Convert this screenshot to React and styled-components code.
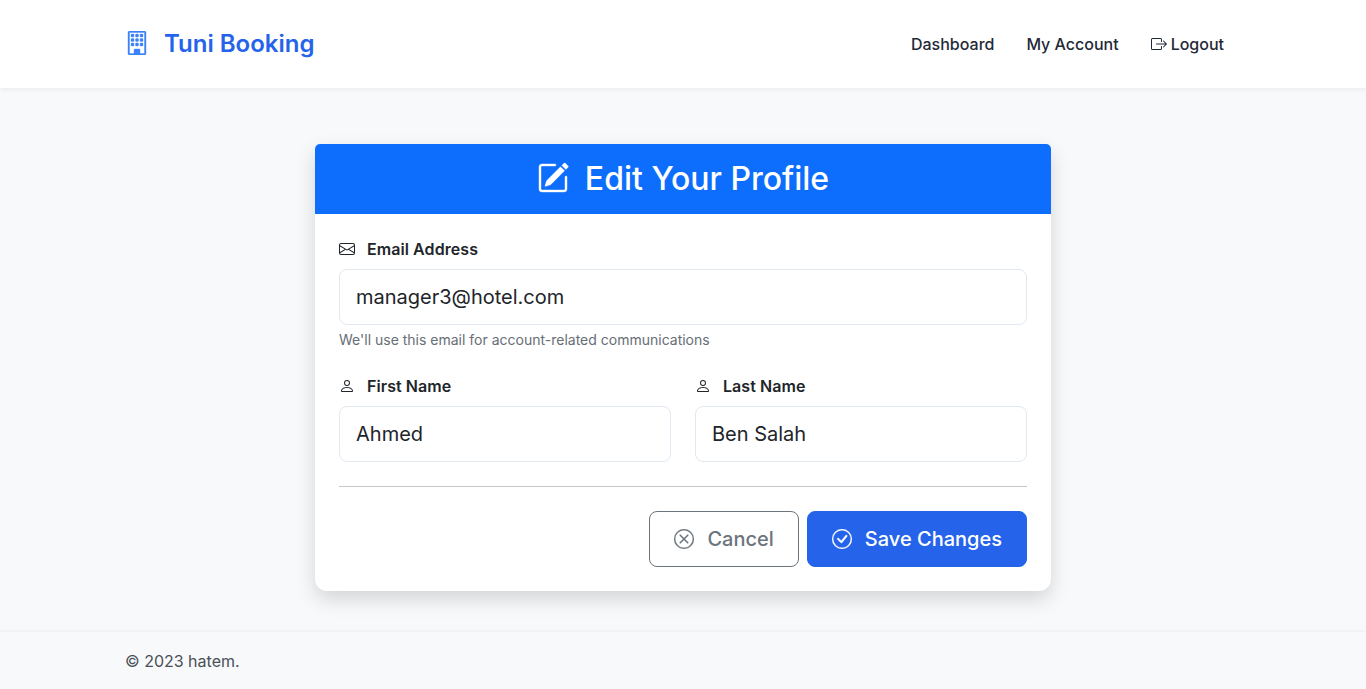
import React from "react";
import styled, { createGlobalStyle } from "styled-components";
import { BsBuilding, BsBoxArrowRight, BsPencilSquare, BsEnvelope, BsPerson, BsXCircle, BsCheckCircle } from "react-icons/bs";

const Global = createGlobalStyle`
  * { box-sizing: border-box; }
  html, body { margin: 0; padding: 0; }
  body { background: #f8f9fa; font-family: Inter, "Liberation Sans", sans-serif; color: #212529; }
`;
const Page = styled.div`
  min-height: 689px;
  display: flex;
  flex-direction: column;
`;
const TopBar = styled.header`
  height: 88px;
  background: #fff;
  box-shadow: 0 2px 4px rgba(0, 0, 0, 0.05);
  display: flex;
  justify-content: center;
`;
const TopInner = styled.div`
  width: 1140px;
  padding: 0 12px;
  display: flex;
  align-items: center;
  justify-content: space-between;
`;
const Brand = styled.a`
  display: flex;
  align-items: center;
  gap: 15px;
  padding-bottom: 2px;
  font-size: 24px;
  font-weight: 600;
  color: #2563eb;
  svg { width: 24px; height: 24px; color: #3b82f6; stroke: currentColor; stroke-width: 0.25; }
`;
const NavList = styled.nav`
  display: flex;
  align-items: center;
  gap: 32px;
  padding-right: 17px;
`;
const NavLink = styled.a`
  display: flex;
  align-items: center;
  gap: 4px;
  font-size: 16px;
  font-weight: 500;
  color: #1f2937;
  svg { width: 16px; height: 16px; }
`;
const Main = styled.main`
  flex: 1;
  padding-top: 56px;
  display: flex;
  justify-content: center;
  align-items: flex-start;
`;
const Card = styled.section`
  width: 736px;
  background: #fff;
  border-radius: 5px 5px 12px 12px;
  box-shadow: 0 8px 20px rgba(0, 0, 0, 0.15);
  overflow: hidden;
`;
const CardHeader = styled.h1`
  margin: 0;
  height: 70px;
  padding-bottom: 2px;
  background: #0d6efd;
  color: #fff;
  font-size: 32px;
  font-weight: 500;
  display: flex;
  align-items: center;
  justify-content: center;
  gap: 16px;
  svg { width: 32px; height: 32px; stroke: currentColor; stroke-width: 0.2; }
`;
const Form = styled.form`
  padding: 24px;
  display: flex;
  flex-direction: column;
`;
const Field = styled.div`
  display: flex;
  flex-direction: column;
  min-width: 0;
`;
const Label = styled.label`
  display: flex;
  align-items: center;
  gap: 12px;
  height: 23px;
  padding-bottom: 2px;
  margin-bottom: 8px;
  font-size: 16px;
  font-weight: 600;
  letter-spacing: 0.07px;
  color: #212529;
  svg { width: 16px; height: 16px; }
`;
const Input = styled.input`
  height: 56px;
  width: 100%;
  padding: 0 16px;
  border: 1px solid #e2e8f0;
  border-radius: 8px;
  background: #fff;
  font: 400 20px Inter, "Liberation Sans", sans-serif;
  color: #212529;
  outline: none;
`;
const Help = styled.div`
  margin-top: 4px;
  font-size: 14px;
  line-height: 21px;
  color: #666e76;
`;
const TwoCols = styled.div`
  display: grid;
  grid-template-columns: 1fr 1fr;
  gap: 24px;
  margin-top: 25px;
`;
const Divider = styled.hr`
  margin: 24px 0;
  border: 0;
  border-top: 1px solid #c6c7c8;
`;
const Actions = styled.div`
  display: flex;
  justify-content: flex-end;
  gap: 8px;
`;
const Button = styled.button`
  height: 56px;
  padding: 0 24px;
  border-radius: 8px;
  display: flex;
  align-items: center;
  gap: 13px;
  font: 500 20px Inter, "Liberation Sans", sans-serif;
  border: 1px solid ${(p) => (p.$primary ? "#2563eb" : "#6c757d")};
  background: ${(p) => (p.$primary ? "#2563eb" : "#fff")};
  color: ${(p) => (p.$primary ? "#fff" : "#6c757d")};
  svg { width: 20px; height: 20px; stroke: currentColor; stroke-width: 0.2; }
`;
const Footer = styled.footer`
  height: 57px;
  background: #f8f9fa;
  box-shadow: 0 -1px 3px rgba(0, 0, 0, 0.05);
  display: flex;
  justify-content: center;
`;
const FooterInner = styled.div`
  width: 1140px;
  padding: 0 12px;
  display: flex;
  align-items: center;
  font-size: 16px;
  color: #495057;
`;

export default function App() {
  return (
    <Page>
      <Global />
      <TopBar>
        <TopInner>
          <Brand><BsBuilding />Tuni Booking</Brand>
          <NavList>
            <NavLink>Dashboard</NavLink>
            <NavLink>My Account</NavLink>
            <NavLink><BsBoxArrowRight />Logout</NavLink>
          </NavList>
        </TopInner>
      </TopBar>
      <Main>
        <Card>
          <CardHeader><BsPencilSquare />Edit Your Profile</CardHeader>
          <Form>
            <Field>
              <Label><BsEnvelope />Email Address</Label>
              <Input defaultValue="manager3@hotel.com" />
              <Help>We'll use this email for account-related communications</Help>
            </Field>
            <TwoCols>
              <Field>
                <Label><BsPerson />First Name</Label>
                <Input defaultValue="Ahmed" />
              </Field>
              <Field>
                <Label><BsPerson />Last Name</Label>
                <Input defaultValue="Ben Salah" />
              </Field>
            </TwoCols>
            <Divider />
            <Actions>
              <Button type="button"><BsXCircle />Cancel</Button>
              <Button type="button" $primary><BsCheckCircle />Save Changes</Button>
            </Actions>
          </Form>
        </Card>
      </Main>
      <Footer>
        <FooterInner>© 2023 hatem.</FooterInner>
      </Footer>
    </Page>
  );
}
